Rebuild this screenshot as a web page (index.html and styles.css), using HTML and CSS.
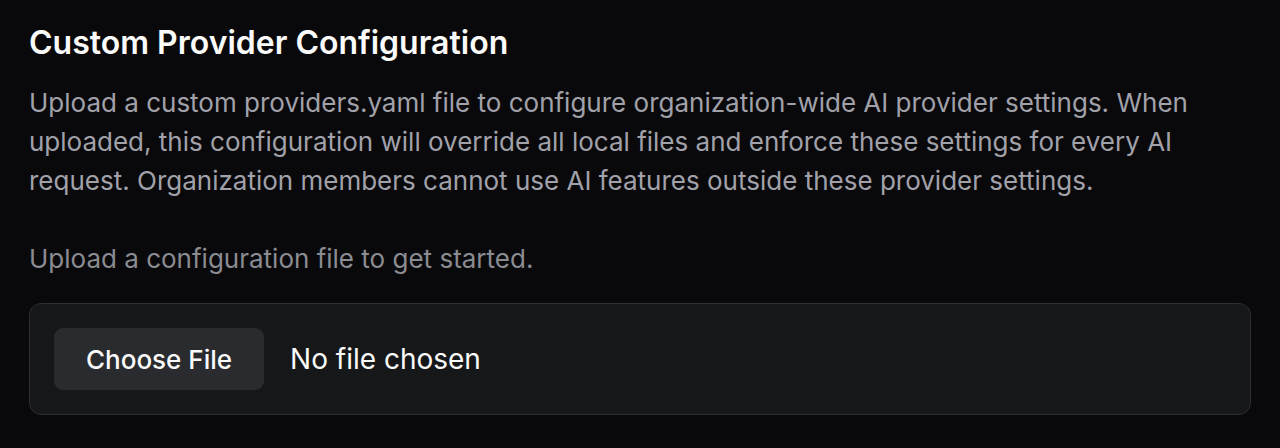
FILE: index.html
```html
<!DOCTYPE html>
<html lang="en">
<head>
  <meta charset="UTF-8" />
  <meta name="viewport" content="width=device-width, initial-scale=1.0"/>
  <title>Custom Provider Configuration</title>
  <link rel="stylesheet" href="styles.css">
</head>
<body>
  <div class="section">
    <h2 class="title">Custom Provider Configuration</h2>
    <p class="desc">Upload a custom providers.yaml file to configure organization-wide AI provider settings. When uploaded, this configuration will override all local files and enforce these settings for every AI request. Organization members cannot use AI features outside these provider settings.</p>
    <p class="hint">Upload a configuration file to get started.</p>
    <div class="upload-box">
      <label class="file-btn" for="fileInput">Choose File</label>
      <input type="file" id="fileInput" class="file-input" />
      <span class="file-name">No file chosen</span>
    </div>
  </div>
</body>
</html>
```

FILE: styles.css
```css
body {
  margin: 0;
  background-color: #09090b;
  font-family: Inter, "Noto Sans", sans-serif;
  color: #fafafa;
}

.section {
  padding: 23px 29px 0 29px;
}

.title {
  margin: 0;
  font-size: 32px;
  line-height: 40px;
  font-weight: 600;
  color: #fafafa;
}

.desc {
  margin: 20px 0 0 0;
  font-size: 26px;
  line-height: 39px;
  color: #a1a1aa;
}

.hint {
  margin: 39px 0 0 0;
  font-size: 26px;
  line-height: 39px;
  color: #8b8b92;
}

.upload-box {
  margin-top: 25px;
  display: flex;
  align-items: center;
  gap: 26px;
  padding: 24px;
  background-color: #161719;
  border: 1px solid #2e2f33;
  border-radius: 12px;
}

.file-btn {
  display: flex;
  align-items: center;
  height: 62px;
  padding: 0 32px;
  box-sizing: border-box;
  background-color: #2a2b2e;
  border-radius: 9px;
  font-size: 26px;
  font-weight: 500;
  color: #fafafa;
  cursor: pointer;
}

.file-input {
  display: none;
}

.file-name {
  font-size: 28px;
  color: #fafafa;
}
```
